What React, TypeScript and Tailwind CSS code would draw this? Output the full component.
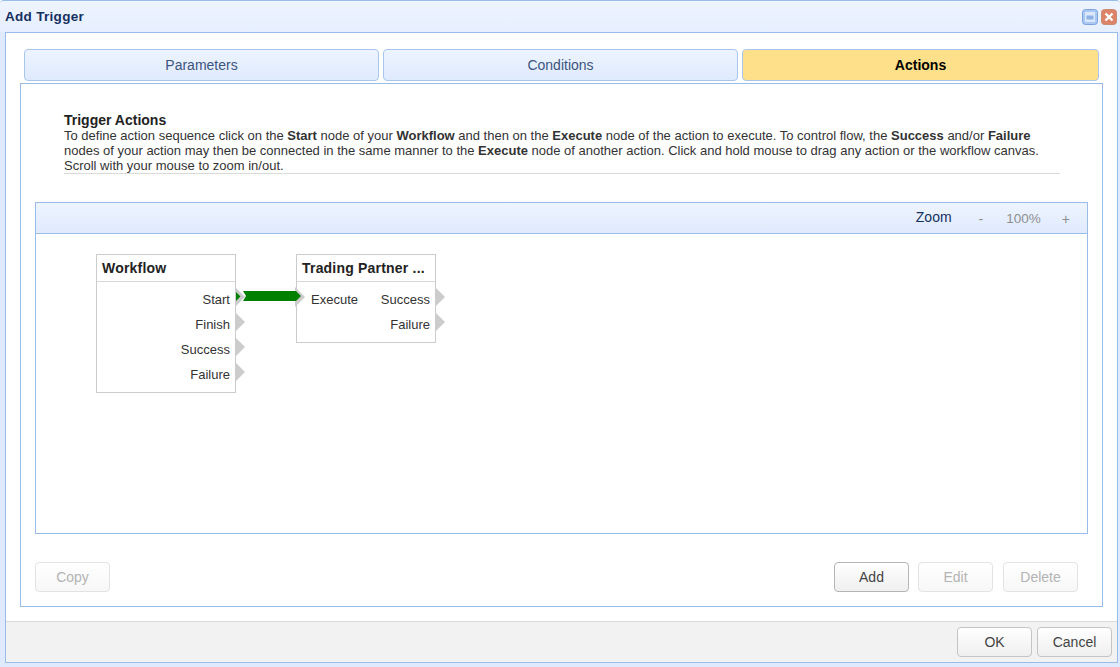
const font = { fontFamily: '"Liberation Sans", Arial, sans-serif' };

const btn = 'h-[30px] w-[75px] rounded-[4px] border text-sm bg-gradient-to-b from-white to-[#efefef]';
const btnOn = 'border-[#b5b5b5] text-[#444]';
const btnOff = 'border-[#e3e3e3] text-[#b3b3b3] from-[#fdfdfd] to-[#f7f7f7]';

function Port({ top, active, side }: { top: number; active?: boolean; side: 'out' | 'in' }) {
  // small grey triangle on the edge of a node
  return (
    <svg
      className={`absolute ${side === 'out' ? 'left-[139px]' : 'left-[-1px]'}`}
      style={{ top }}
      width="11"
      height="20"
      viewBox="0 0 11 20"
    >
      <path d="M0 0 L10 10 L0 20 Z" fill="#cccccc" />
      {active && <path d="M1 5 L5.5 9.5 L1 14 Z" fill="#008000" />}
    </svg>
  );
}

function Row({ left, right }: { left?: string; right: string }) {
  return (
    <div className="flex h-[25px] items-center justify-between pl-[14px] pr-[5px] text-[13px] text-[#333]">
      <span>{left}</span>
      <span>{right}</span>
    </div>
  );
}

function Node({ title, rows, className }: { title: string; rows: { left?: string; right: string }[]; className: string }) {
  return (
    <div className={`absolute w-[140px] border border-[#cccccc] bg-white ${className}`}>
      <div className="h-[27px] border-b border-[#d8d8d8] pl-[5px] pt-[6px] text-sm font-bold leading-[15px] tracking-[0.2px] text-[#222]">
        {title}
      </div>
      <div className="pt-[5px]">
        {rows.map((r) => (
          <Row key={r.right} left={r.left} right={r.right} />
        ))}
      </div>
    </div>
  );
}

export default function App() {
  return (
    <div className="flex h-[667px] w-[1120px] flex-col overflow-hidden rounded-t-[4px] border-t border-[#99bce8] bg-[#dfeaff]" style={font}>
      <div className="flex h-[31px] shrink-0 items-center justify-between bg-gradient-to-b from-[#eef4ff] to-[#e6efff] pl-[5px] pr-[3px]">
        <span className="pt-[1px] text-[13.5px] font-bold tracking-[0.3px] text-[#15305f]">Add Trigger</span>
        <div className="flex gap-[3px]">
          <svg width="16" height="16" viewBox="0 0 16 16">
            <rect x="0.5" y="0.5" width="15" height="15" rx="3" fill="#a9c8f3" stroke="#7ca3dc" />
            <rect x="3" y="3" width="10" height="10" fill="#dbe8fb" />
            <rect x="4.5" y="6.5" width="7" height="4" fill="#8fb2e6" />
          </svg>
          <svg width="16" height="16" viewBox="0 0 16 16">
            <rect x="0.5" y="0.5" width="15" height="15" rx="3" fill="#dd8468" stroke="#c98a70" />
            <path d="M4.5 4.5 L11.5 11.5 M11.5 4.5 L4.5 11.5" stroke="#fff" strokeWidth="2.4" />
          </svg>
        </div>
      </div>

      <div className="ml-[5px] mr-[2px] flex h-[631px] shrink-0 flex-col border border-[#99bce8] bg-white">
        <div className="flex-1 px-[14px] pt-[16px]">
          <div className="ml-[4px] flex w-[1075px] gap-[4px] text-sm">
            <div className="flex h-[32px] w-[355px] items-center justify-center rounded-[4px] border border-[#a9c6ef] bg-gradient-to-b from-[#edf4ff] to-[#dfeafd] text-[#3b5480]">Parameters</div>
            <div className="flex h-[32px] w-[355px] items-center justify-center rounded-[4px] border border-[#a9c6ef] bg-gradient-to-b from-[#edf4ff] to-[#dfeafd] text-[#3b5480]">Conditions</div>
            <div className="flex h-[32px] w-[357px] items-center justify-center rounded-[4px] border border-[#a9c6ef] bg-[#ffe08a] font-bold text-black">Actions</div>
          </div>

          <div className="mt-[2px] flex h-[524px] w-[1083px] flex-col border border-[#99bce8] px-[14px]">
            <div className="ml-[29px] mt-[28px] h-[62px] w-[996px] border-b border-[#d9d9d9] pt-[1px] text-[13px] leading-[15px] text-[#333]">
              <div className="text-sm font-bold leading-[15px] text-[#222]">Trigger Actions</div>
              <p>
                To define action sequence click on the <b>Start</b> node of your <b>Workflow</b> and then on the <b>Execute</b> node of the action to execute. To control flow, the <b>Success</b> and/or <b>Failure</b> nodes of your action may then be connected in the same manner to the <b>Execute</b> node of another action. Click and hold mouse to drag any action or the workflow canvas. Scroll with your mouse to zoom in/out.
              </p>
            </div>

            <div className="mt-[28px] flex h-[332px] w-[1053px] shrink-0 flex-col border border-[#99bce8]">
              <div className="flex h-[31px] shrink-0 items-center justify-end border-b border-[#99bce8] bg-gradient-to-b from-[#eef4ff] to-[#dfeafd] pr-[17px] pt-[2px] text-sm text-[#8f8f8f]">
                <span className="-mt-[4px] mr-[27px] text-[#15305f]">Zoom</span>
                <span className="mr-[23px]">-</span>
                <span className="mr-[21px] text-[13.5px]">100%</span>
                <span>+</span>
              </div>
              <div className="relative flex-1">
                <Node
                  title="Workflow"
                  className="left-[60px] top-[20px] h-[139px]"
                  rows={[{ right: 'Start' }, { right: 'Finish' }, { right: 'Success' }, { right: 'Failure' }]}
                />
                <div className="absolute left-[60px] top-[20px]">
                  <Port side="out" top={33} active />
                  <Port side="out" top={58} />
                  <Port side="out" top={83} />
                  <Port side="out" top={108} />
                </div>
                <Node
                  title="Trading Partner ..."
                  className="left-[260px] top-[20px] h-[89px]"
                  rows={[{ left: 'Execute', right: 'Success' }, { right: 'Failure' }]}
                />
                <div className="absolute left-[260px] top-[20px]">
                  <Port side="in" top={33} />
                  <Port side="out" top={33} />
                  <Port side="out" top={58} />
                </div>
                {/* connection from Start to Execute */}
                <svg className="absolute left-[200px] top-[50px]" width="70" height="24" viewBox="0 0 70 24">
                  <path d="M7 7 L60 7 L65 12 L60 17 L7 17 L10 12 Z" fill="#008000" />
                </svg>
              </div>
            </div>

            <div className="mt-[28px] flex w-[1043px] text-sm">
              <button className={`${btn} ${btnOff}`}>Copy</button>
              <div className="flex-1" />
              <button className={`${btn} ${btnOn}`}>Add</button>
              <button className={`${btn} ${btnOff} ml-[9px]`}>Edit</button>
              <button className={`${btn} ${btnOff} ml-[10px]`}>Delete</button>
            </div>
          </div>
        </div>

        <div className="flex h-[41px] shrink-0 items-center justify-end gap-[5px] border-t border-[#d9d9d9] bg-[#f2f2f2] pr-[5px]">
          <button className={`${btn} ${btnOn} border-[#c4c4c4]`}>OK</button>
          <button className={`${btn} ${btnOn} border-[#c4c4c4]`}>Cancel</button>
        </div>
      </div>
    </div>
  );
}
